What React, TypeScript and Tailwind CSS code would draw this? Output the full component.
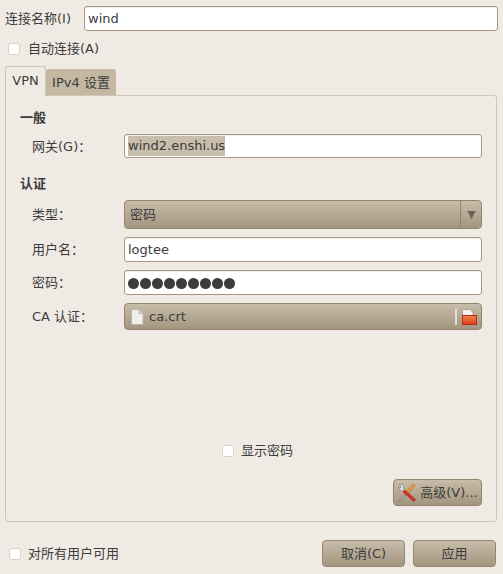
const font = { fontFamily: '"DejaVu Sans", "Noto Sans CJK SC", sans-serif' };

function Check({ label, className = "", gap = "gap-[7px]" }: { label: string; className?: string; gap?: string }) {
  return (
    <div className={`flex items-center ${gap} ${className}`}>
      <span className="h-[12px] w-[12px] rounded-[3px] border border-[#d9d2c5] bg-white" />
      <span>{label}</span>
    </div>
  );
}

function Field({ children }: { children: React.ReactNode }) {
  return (
    <div className="flex h-full w-full items-center rounded-[3px] border border-[#a8977d] bg-white pl-[3px] shadow-[inset_0_1px_1px_rgba(0,0,0,0.08)]">
      {children}
    </div>
  );
}

function Row({ label, h, children, className = "" }: { label: string; h: string; children: React.ReactNode; className?: string }) {
  return (
    <div className={`flex items-center ${h} ${className}`}>
      <div className="w-[104px] shrink-0 pl-[12px] leading-none">{label}</div>
      <div className="h-full w-[358px]">{children}</div>
    </div>
  );
}

const btn =
  "flex items-center justify-center rounded-[4px] border border-[#93846d] bg-gradient-to-b from-[#c8bda9] to-[#a3967f] text-[#3c3c3c]";

function Advanced() {
  return (
    <svg width="20" height="20" viewBox="0 0 20 20" fill="none">
      <path d="M18 2.5 L16.5 1 L7 11 L8.8 12.8 Z" fill="#f0a040" stroke="#b56a1c" strokeWidth="0.8" />
      <path d="M7.5 11.5 L3 16 L1.5 18.5 L3.5 17.5 L8.5 12.5 Z" fill="#b8b8b2" stroke="#6f6f68" strokeWidth="0.6" />
      <path d="M2.5 1 L5.5 1.8 L6.8 4 L6.2 5.8 L8 7.5 L6.5 9 L4.6 7.2 L2.6 7.2 L1 4.5 L3.2 5.4 L4.2 4.2 Z" fill="#f2f2ee" stroke="#7a7a72" strokeWidth="0.7" />
      <path d="M7.5 7 L18.5 16.5 L16.8 18.5 L6 8.8 Z" fill="#d8322a" stroke="#9b1c14" strokeWidth="0.7" />
    </svg>
  );
}

export default function App() {
  return (
    <div style={font} className="flex h-[574px] w-[503px] flex-col overflow-hidden bg-[#efebe4] text-[13px] text-[#3c3c3c]">
      <div className="mt-[6px] flex h-[25px] items-center pl-[5px] pr-[5px]">
        <div className="w-[79px] shrink-0 leading-none">连接名称(I)</div>
        <div className="h-full flex-1">
          <Field>wind</Field>
        </div>
      </div>

      <Check label="自动连接(A)" gap="gap-[8px]" className="mt-[11px] h-[14px] pl-[8px]" />

      <div className="mt-[10px] flex h-[30px] items-end pl-[5px]">
        <div className="relative z-10 flex h-[30px] w-[41px] items-center justify-center rounded-t-[3px] border border-b-0 border-[#cfc6b5] bg-[#efebe4] pb-[2px]">VPN</div>
        <div className="flex h-[27px] w-[70px] items-center justify-center rounded-t-[3px] bg-[#c4b8a3] pt-[1px]">IPv4 设置</div>
      </div>

      <div className="ml-[5px] mt-[-1px] flex h-[427px] w-[492px] flex-col rounded-b-[3px] rounded-tr-[3px] border border-[#cfc6b5] pl-[14px]">
        <div className="mt-[14px] h-[16px] font-bold leading-[16px]">一般</div>
        <Row label="网关(G)：" h="h-[24px]" className="mt-[8px]">
          <Field><span className="bg-[#c9bdab]">wind2.enshi.us</span></Field>
        </Row>

        <div className="mt-[18px] h-[16px] font-bold leading-[16px]">认证</div>
        <Row label="类型：" h="h-[29px]" className="mt-[8px]">
          <div className="flex h-full rounded-[4px] border border-[#93846d] bg-gradient-to-b from-[#c8bda9] to-[#a3967f]">
            <div className="flex flex-1 items-center pl-[5px]">密码</div>
            <div className="flex w-[21px] items-center justify-center border-l border-[#93846d]">
              <svg width="9" height="10" viewBox="0 0 9 10"><path d="M.5 1H8.5V2.5H7.6L4.5 9.5L1.4 2.5H.5Z" fill="#67625a" /></svg>
            </div>
          </div>
        </Row>
        <Row label="用户名：" h="h-[25px]" className="mt-[8px]">
          <Field>logtee</Field>
        </Row>
        <Row label="密码：" h="h-[25px]" className="mt-[8px]">
          <Field>
            <span className="mt-[1px] flex gap-[1px]">
              {Array.from({ length: 9 }).map((_, i) => (
                <span key={i} className="h-[11px] w-[11px] rounded-full bg-[#3c3c3c]" />
              ))}
            </span>
          </Field>
        </Row>
        <Row label="CA 认证：" h="h-[27px]" className="mt-[8px]">
          <div className="flex h-full items-center rounded-[4px] border border-[#93846d] bg-gradient-to-b from-[#c8bda9] to-[#a3967f] pl-[5px] pr-[4px]">
            <svg width="14" height="16" viewBox="0 0 14 16"><path d="M1.5 .5H9L13 4.5V15.5H1.5Z" fill="#f1efe9" stroke="#b9b5ab" /><path d="M9 .5V4.5H13" fill="#d8d5cd" stroke="#b9b5ab" /></svg>
            <span className="ml-[5px] flex-1">ca.crt</span>
            <span className="mr-[4px] h-[16px] w-[2px] bg-[#e6dfd2]" />
            <svg width="16" height="16" viewBox="0 0 16 16">
              <defs>
                <linearGradient id="folderFill" x1="0" y1="0" x2="0" y2="1">
                  <stop offset="0" stopColor="#f0874a" />
                  <stop offset="1" stopColor="#dc3a1c" />
                </linearGradient>
              </defs>
              <path d="M1.5 .5H9L12 3.5V8H1.5Z" fill="#f4f2ed" stroke="#a8a498" />
              <rect x="1.5" y="6.5" width="14" height="9" fill="url(#folderFill)" stroke="#b8281a" />
            </svg>
          </div>
        </Row>

        <Check label="显示密码" className="mt-[114px] h-[14px] pl-[202px]" />

        <div className="mt-[21px] flex justify-end pr-[14px]">
          <div className={`${btn} h-[27px] w-[89px] gap-[3px]`}>
            <Advanced />
            <span>高级(V)...</span>
          </div>
        </div>
      </div>

      <div className="mt-[18px] flex h-[27px] items-center pl-[9px]">
        <Check label="对所有用户可用" className="h-[14px]" />
        <div className="ml-auto mr-[7px] flex gap-[8px]">
          <div className={`${btn} h-[27px] w-[83px]`}>取消(C)</div>
          <div className={`${btn} h-[27px] w-[83px]`}>应用</div>
        </div>
      </div>
    </div>
  );
}
